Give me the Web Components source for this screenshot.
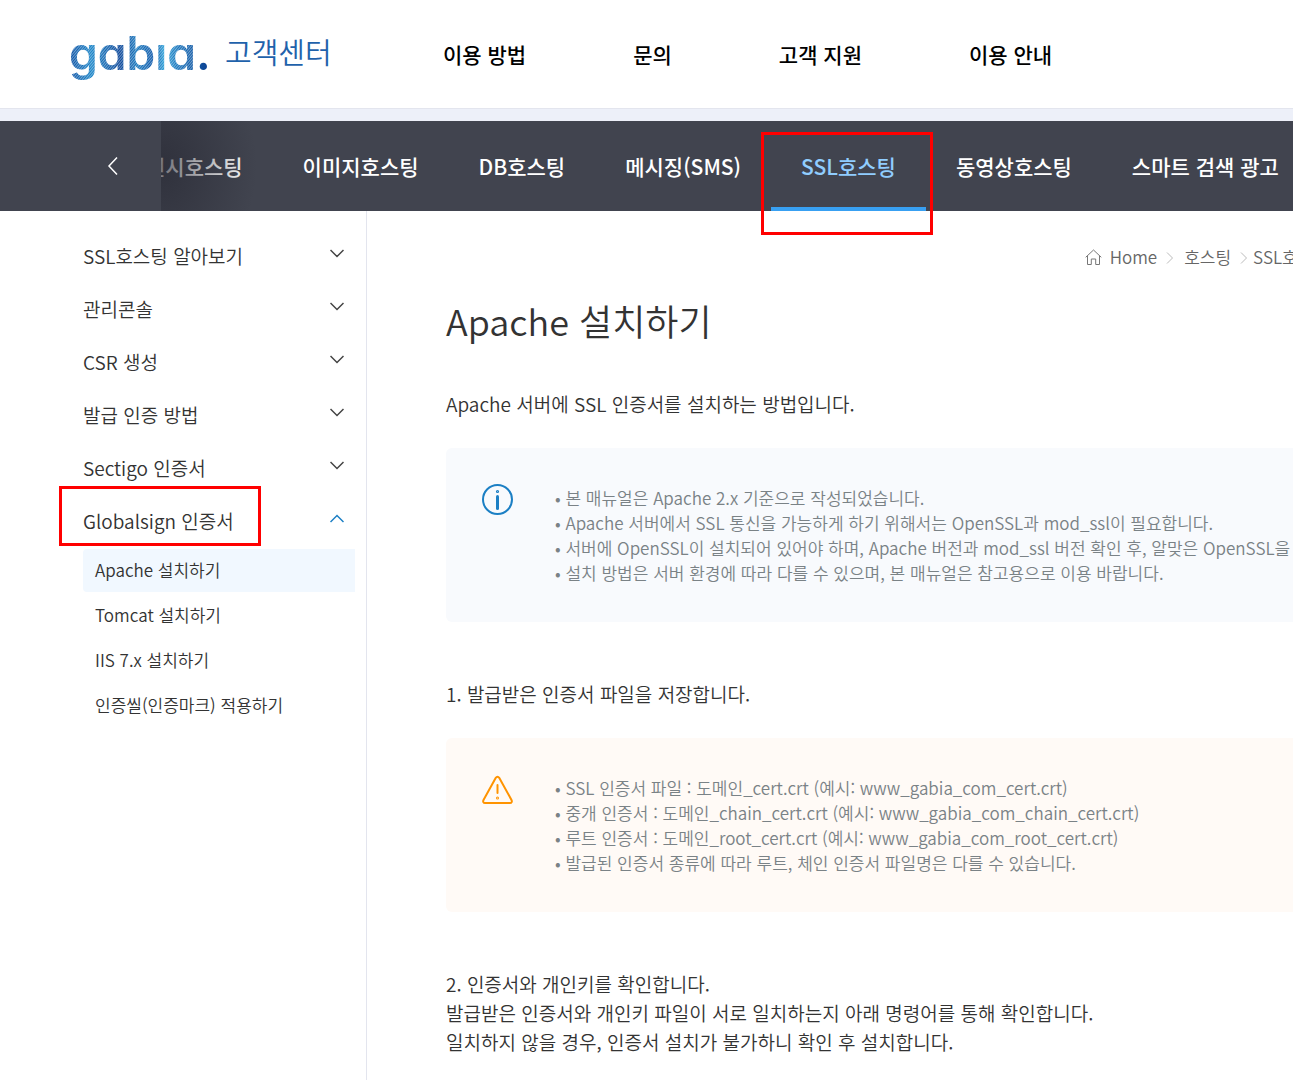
<!DOCTYPE html>
<html lang="ko">
  <head>
    <meta charset="utf-8">
    <title>Apache 설치하기 - 가비아 고객센터</title>
    <style>
      body {
        margin: 0;
        overflow-x: hidden;
        background: #fff;
        color: #333;
        font-family: "Noto Sans CJK KR", sans-serif;
        font-size: 19px;
        line-height: 29px;
      }
    </style>
  </head>
  <body>
    <template id="help-header">
      <style>
        :host {
          display: flex;
          align-items: center;
          height: 108px;
          padding-left: 70px;
          border-bottom: 1px solid #e3e5ee;
          white-space: nowrap;
        }
        .brand { display: flex; align-items: center; width: 373px; padding-bottom: 5px; color: #1f62ab; font-size: 29px; font-weight: 350; text-decoration: none; }
        .brand svg { display: block; margin-right: 15px; }
        nav { display: flex; gap: 107px; font-size: 21px; font-weight: 500; }
        ::slotted(a) { color: #000; text-decoration: none; }
      </style>
      <a class="brand" href="#">
        <svg width="140" height="60" viewBox="0 0 140 60" aria-label="gabia">
          <defs>
            <linearGradient id="blue" x1="0" y1="0" x2="1" y2="0">
              <stop offset="0" stop-color="#0d4fa2"/>
              <stop offset=".16" stop-color="#1a85c8"/>
              <stop offset=".36" stop-color="#0c4698"/>
              <stop offset=".48" stop-color="#1778be"/>
              <stop offset=".6" stop-color="#0e56a8"/>
              <stop offset=".67" stop-color="#2b9fd8"/>
              <stop offset=".78" stop-color="#1770b8"/>
              <stop offset="1" stop-color="#0c3f90"/>
            </linearGradient>
            <pattern id="stripes" width="2" height="2" patternUnits="userSpaceOnUse" patternTransform="rotate(40)">
              <rect width="2" height="2" fill="#fff"/>
              <rect width="1" height="2" fill="#999"/>
            </pattern>
            <mask id="cut">
              <rect width="140" height="60" fill="url(#stripes)"/>
              <rect x="86" y="0" width="15" height="20" fill="#000"/>
              <rect x="124" y="36" width="16" height="20" fill="#fff"/>
            </mask>
          </defs>
          <text x="-1" y="48" mask="url(#cut)" fill="url(#blue)" font-family="Inter" font-size="46" font-weight="600" style="font-feature-settings: 'cv11'">gabia.</text>
        </svg>
        <span>고객센터</span>
      </a>
      <nav><slot></slot></nav>
    </template>

    <template id="service-nav">
      <style>
        :host { display: flex; height: 90px; border-top: 12px solid #edf0f9; background: #41444f; color: #fff; }
        button { flex: none; width: 161px; padding: 0 0 0 64px; border: 0; background: none; color: inherit; }
        button svg { display: block; margin: 0 auto 0 42px; }
        .track { position: relative; display: flex; flex: 1; min-width: 0; overflow-x: clip; }
        .tabs { display: flex; margin-left: -45px; }
        /* fade on the scrolled-off side */
        .track::before {
          content: "";
          position: absolute;
          z-index: 1;
          inset: 0 auto 0 0;
          width: 96px;
          background: radial-gradient(96px 120px at 0 50%, rgba(38, 39, 50, .65), rgba(65, 68, 79, 0));
        }
      </style>
      <button type="button" aria-label="이전">
        <svg width="14" height="20" viewBox="0 0 14 20" fill="none" stroke="currentColor" stroke-width="1.500"><path d="M11 1.500 3 10l8 8.500"/></svg>
      </button>
      <div class="track"><div class="tabs"><slot></slot></div></div>
    </template>

    <template id="service-tab">
      <style>
        :host { display: flex; position: relative; flex: none; }
        a { display: flex; align-items: center; padding: 0 30px; color: #fff; font-size: 21px; font-weight: 500; text-decoration: none; white-space: nowrap; }
        :host([current]) a { color: #90cdff; box-shadow: inset 0 -4px #38a0f2; }
        :host([marked])::after {
          content: "";
          position: absolute;
          inset: 11px -7px -24px -10px;
          border: 3px solid #f00;
        }
      </style>
      <a href="#"><slot></slot></a>
    </template>

    <template id="side-menu">
      <style>
        :host { display: block; flex: none; width: 272px; padding: 18px 11px 0 83px; border-right: 1px solid #e3e5ee; }
      </style>
      <nav><slot></slot></nav>
    </template>

    <template id="side-group">
      <style>
        :host { display: block; position: relative; }
        button {
          display: flex;
          align-items: center;
          justify-content: space-between;
          width: 100%;
          height: 53px;
          padding: 0 11px 0 0;
          border: 0;
          background: none;
          color: #333;
          font: inherit;
          font-weight: 350;
        }
        svg { margin-bottom: 4px; fill: none; stroke: #444; stroke-width: 1.500; }
        :host([open]) svg { stroke: #1b7fc4; transform: rotate(180deg); }
        .links { display: grid; gap: 2px; margin-top: 2px; }
        :host(:not([open])) .links { display: none; }
        :host([marked])::after {
          content: "";
          position: absolute;
          top: -8px;
          left: -24px;
          width: 196px;
          height: 54px;
          border: 3px solid #f00;
        }
      </style>
      <button type="button">
        <span></span>
        <svg width="14" height="9" viewBox="0 0 14 9"><path d="m.5 1 6.500 6.500L13.500 1"/></svg>
      </button>
      <div class="links"><slot></slot></div>
    </template>

    <template id="side-link">
      <style>
        :host { display: block; }
        a { display: flex; align-items: center; box-sizing: border-box; height: 43px; padding: 0 0 2px 12px; border-radius: 4px 0 0 4px; color: #333; font-size: 17px; font-weight: 350; text-decoration: none; }
        :host([current]) a { background: #f1f8ff; }
      </style>
      <a href="#"><slot></slot></a>
    </template>

    <template id="bread-crumb">
      <style>
        :host { display: flex; align-items: center; justify-content: flex-end; padding-right: 3px; color: #666; font-size: 17px; font-weight: 350; white-space: nowrap; }
        a { display: flex; align-items: center; gap: 8px; color: inherit; text-decoration: none; }
        svg { fill: none; stroke: #777; }
        .sep { margin: 2px 5px 0 9px; stroke: #bbb; }
        .sep.wide { margin-right: 10px; }
      </style>
      <a href="#">
        <svg width="17" height="16" viewBox="0 0 17 16"><path d="M.7 8.300 8.500 1l7.800 7.300M2.500 7v8.500h3.800V10h4.400v5.500h3.800V7"/></svg>
        Home
      </a>
      <svg class="sep wide" width="8" height="12" viewBox="0 0 8 12"><path d="m1 .5 5.500 5.500L1 11.500"/></svg>
      <a href="#">호스팅</a>
      <svg class="sep" width="8" height="12" viewBox="0 0 8 12"><path d="m1 .5 5.500 5.500L1 11.500"/></svg>
      <a href="#">SSL호스팅</a>
    </template>

    <template id="notice-box">
      <style>
        :host { display: flex; gap: 42px; margin: 30px 0 57px; padding: 36px 36px 34px; border-radius: 6px; background: #f8fafd; color: #7a8286; font-size: 17px; font-weight: 350; line-height: 25px; white-space: nowrap; }
        :host([type="warning"]) { background: #fffaf6; }
        svg { flex: none; fill: none; stroke-width: 2; stroke-linecap: round; stroke-linejoin: round; }
        .info { stroke: #1b7fc4; }
        .warning { stroke: #ff9300; }
        :host([type="warning"]) .info, :host(:not([type="warning"])) .warning { display: none; }
        .text { min-height: 103px; padding-top: 1px; }
        ::slotted(ul) { margin: 0; padding: 0; list-style: none; }
      </style>
      <svg class="info" width="31" height="31" viewBox="0 0 31 31"><circle cx="15.500" cy="15.500" r="14.500"/><path d="M15.500 12.500v12" stroke-width="3"/><circle cx="15.500" cy="7.500" r=".6"/></svg>
      <svg class="warning" width="31" height="31" viewBox="0 0 31 31"><path d="M13.800 3.800 1.500 26c-.8 1.500-.2 3 1.500 3h25c1.700 0 2.300-1.500 1.500-3L17.200 3.800c-1-1.500-2.400-1.500-3.400 0z"/><path d="M15.500 11v8"/><circle cx="15.500" cy="24" r=".5"/></svg>
      <div class="text"><slot></slot></div>
    </template>

    <template id="help-page">
      <style>
        :host { display: block; min-width: 1360px; }
        .content { display: flex; min-height: 869px; }
        main { flex: 1; min-width: 0; padding: 31px 28px 0 79px; }
        ::slotted(h1) { margin: 23px 0 43px; font-size: 36px; font-weight: 350; line-height: 52px; }
        ::slotted(p) { margin: 0; font-weight: 350; font-size: 19px; }
      </style>
      <slot name="top"></slot>
      <div class="content">
        <slot name="side"></slot>
        <main><slot></slot></main>
      </div>
    </template>

    <help-page>
      <help-header slot="top">
        <a href="#">이용 방법</a>
        <a href="#">문의</a>
        <a href="#">고객 지원</a>
        <a href="#">이용 안내</a>
      </help-header>
      <service-nav slot="top">
        <service-tab>전시호스팅</service-tab>
        <service-tab>이미지호스팅</service-tab>
        <service-tab>DB호스팅</service-tab>
        <service-tab>메시징(SMS)</service-tab>
        <service-tab current marked>SSL호스팅</service-tab>
        <service-tab>동영상호스팅</service-tab>
        <service-tab>스마트 검색 광고</service-tab>
      </service-nav>

      <side-menu slot="side">
        <side-group label="SSL호스팅 알아보기"></side-group>
        <side-group label="관리콘솔"></side-group>
        <side-group label="CSR 생성"></side-group>
        <side-group label="발급 인증 방법"></side-group>
        <side-group label="Sectigo 인증서"></side-group>
        <side-group label="Globalsign 인증서" open marked>
          <side-link current>Apache 설치하기</side-link>
          <side-link>Tomcat 설치하기</side-link>
          <side-link>IIS 7.x 설치하기</side-link>
          <side-link>인증씰(인증마크) 적용하기</side-link>
        </side-group>
      </side-menu>

      <bread-crumb></bread-crumb>
      <h1>Apache 설치하기</h1>
      <p>Apache 서버에 SSL 인증서를 설치하는 방법입니다.</p>
      <notice-box>
        <ul>
          <li>• 본 매뉴얼은 Apache 2.x 기준으로 작성되었습니다.</li>
          <li>• Apache 서버에서 SSL 통신을 가능하게 하기 위해서는 OpenSSL과 mod_ssl이 필요합니다.</li>
          <li>• 서버에 OpenSSL이 설치되어 있어야 하며, Apache 버전과 mod_ssl 버전 확인 후, 알맞은 OpenSSL을 설치</li>
          <li>• 설치 방법은 서버 환경에 따라 다를 수 있으며, 본 매뉴얼은 참고용으로 이용 바랍니다.</li>
        </ul>
      </notice-box>
      <p>1. 발급받은 인증서 파일을 저장합니다.</p>
      <notice-box type="warning">
        <ul>
          <li>• SSL 인증서 파일 : 도메인_cert.crt (예시: www_gabia_com_cert.crt)</li>
          <li>• 중개 인증서 : 도메인_chain_cert.crt (예시: www_gabia_com_chain_cert.crt)</li>
          <li>• 루트 인증서 : 도메인_root_cert.crt (예시: www_gabia_com_root_cert.crt)</li>
          <li>• 발급된 인증서 종류에 따라 루트, 체인 인증서 파일명은 다를 수 있습니다.</li>
        </ul>
      </notice-box>
      <p>2. 인증서와 개인키를 확인합니다.<br>발급받은 인증서와 개인키 파일이 서로 일치하는지 아래 명령어를 통해 확인합니다.<br>일치하지 않을 경우, 인증서 설치가 불가하니 확인 후 설치합니다.</p>
    </help-page>

    <script>
      class TemplateElement extends HTMLElement {
        constructor() {
          super();
          let template = document.getElementById(this.localName);
          this.attachShadow({mode: 'open'})
            .appendChild(template.content.cloneNode(true));
        }
      }

      for (const name of ['help-page', 'help-header', 'service-nav', 'service-tab',
                          'side-menu', 'side-link', 'bread-crumb', 'notice-box']) {
        customElements.define(name, class extends TemplateElement {});
      }

      customElements.define('side-group',
        class extends TemplateElement {
          connectedCallback() {
            const button = this.shadowRoot.querySelector('button');
            button.querySelector('span').textContent = this.getAttribute('label');
            button.setAttribute('aria-expanded', this.hasAttribute('open'));
            button.onclick = () => {
              this.toggleAttribute('open');
              button.setAttribute('aria-expanded', this.hasAttribute('open'));
            };
          }
        }
      );
    </script>
  </body>
</html>
